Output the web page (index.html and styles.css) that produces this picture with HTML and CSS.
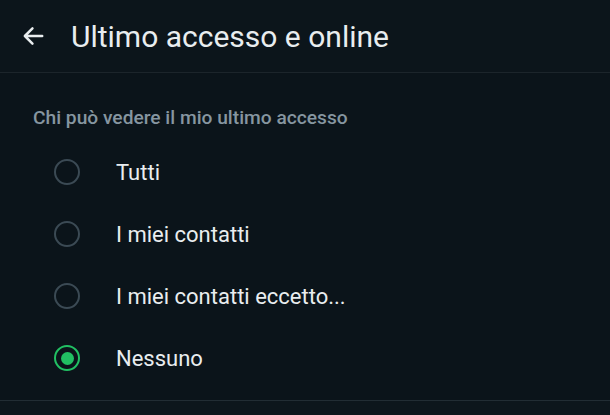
FILE: index.html
```html
<!DOCTYPE html>
<html lang="it">
<head>
<meta charset="utf-8">
<link rel="stylesheet" href="styles.css">
</head>
<body>
<div class="screen">
  <header class="topbar">
    <span class="back">
      <svg width="26" height="26" viewBox="0 0 24 24"><path d="M20.5 12H4.5M11.5 5l-7 7 7 7" fill="none" stroke="#e9edef" stroke-width="2.3" stroke-linecap="round" stroke-linejoin="round"/></svg>
    </span>
    <h1 class="title">Ultimo accesso e online</h1>
  </header>
  <section class="content">
    <p class="section-label">Chi può vedere il mio ultimo accesso</p>
    <ul class="options">
      <li class="option"><span class="radio"></span><span class="label">Tutti</span></li>
      <li class="option"><span class="radio"></span><span class="label">I miei contatti</span></li>
      <li class="option"><span class="radio"></span><span class="label">I miei contatti eccetto...</span></li>
      <li class="option"><span class="radio checked"></span><span class="label">Nessuno</span></li>
    </ul>
  </section>
  <div class="bottom"></div>
</div>
</body>
</html>
```
FILE: styles.css
```css
html, body {
  margin: 0;
  padding: 0;
  background: #0b141a;
}
.screen {
  width: 610px;
  height: 415px;
  background: #0b141a;
  font-family: Roboto, "Noto Sans", sans-serif;
  overflow: hidden;
  display: flex;
  flex-direction: column;
}
.topbar {
  height: 73px;
  flex: none;
  display: flex;
  align-items: center;
  border-bottom: 1px solid #1c252b;
  box-sizing: border-box;
  padding-left: 20px;
  background: #0c151b;
}
.back {
  width: 26px;
  height: 26px;
  display: flex;
  margin-right: 25px;
}
.title {
  margin: 0;
  font-size: 30px;
  font-weight: 400;
  color: #e9edef;
}
.content {
  padding: 0 0 0 33px;
  flex: 1;
}
.section-label {
  margin: 34px 0 0;
  font-size: 19.2px;
  font-weight: 500;
  color: #8696a0;
  line-height: 22px;
}
.options {
  list-style: none;
  margin: 12px 0 0;
  padding: 0;
}
.option {
  height: 62px;
  display: flex;
  align-items: center;
}
.radio {
  width: 22px;
  height: 22px;
  border: 2px solid #3b4a54;
  border-radius: 50%;
  margin-left: 21px;
  margin-right: 36px;
  box-sizing: content-box;
  display: flex;
  align-items: center;
  justify-content: center;
}
.radio.checked {
  border-color: #21c063;
}
.radio.checked::after {
  content: "";
  width: 13px;
  height: 13px;
  border-radius: 50%;
  background: #21c063;
}
.label {
  font-size: 22px;
  color: #e9edef;
}
.bottom {
  flex: none;
  height: 14px;
  border-top: 1px solid #222d34;
  background: #0d161c;
}
```
